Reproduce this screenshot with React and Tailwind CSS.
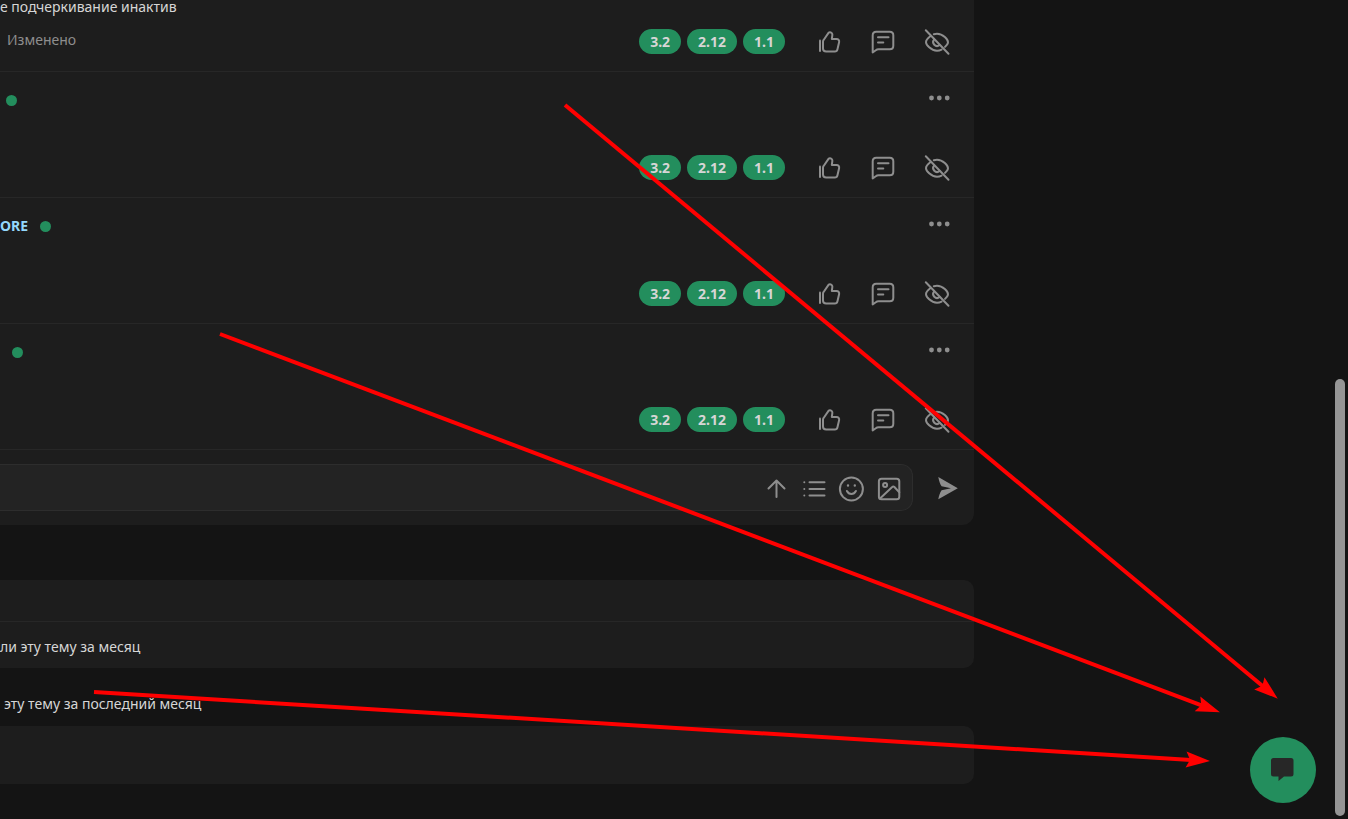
import { clsx } from "clsx";

const TAGS = ["3.2", "2.12", "1.1"];

const POSTS = [
  { id: 1, name: "", dotClass: "ml-1.5" },
  { id: 2, name: "ORE", dotClass: "ml-3" },
  { id: 3, name: "", dotClass: "ml-3" },
];

const ARROWS = [
  { from: [565, 105], to: [1277, 698] },
  { from: [220, 334], to: [1219, 712] },
  { from: [94, 692], to: [1209, 761] },
];

function Icon({ size = 24, children }) {
  return (
    <svg
      width={size}
      height={size}
      viewBox={`0 0 ${size} ${size}`}
      fill="none"
      stroke="currentColor"
      strokeWidth="2"
      strokeLinecap="round"
      strokeLinejoin="round"
      className="block overflow-visible"
      aria-hidden="true"
    >
      {children}
    </svg>
  );
}

function IconButton({ label, className, children }) {
  return (
    <button type="button" aria-label={label} className={clsx("shrink-0 text-[#8e8e8e] hover:text-[#d6d6d6]", className)}>
      {children}
    </button>
  );
}

const LikeIcon = () => (
  <Icon>
    <path d="M3 10.500v10.500" />
    <path d="M6 11.700c0-.9.3-1.400.8-2L11.500 2.900c.8-1.100 2.500-.9 3.300.2.6.7.7 1.400.5 2.200L14.800 9h4.700c1.900 0 3 1.500 2.600 3.200l-1.700 7.200c-.3 1.300-1.300 2-2.500 2H9.200C7.300 21.400 6 20.200 6 18.400z" />
  </Icon>
);

const CommentIcon = () => (
  <Icon>
    <path d="M1.700 22.500V5.200c0-2.200 1.300-3.500 3.500-3.500h13.600c2.200 0 3.500 1.300 3.500 3.500v10.600c0 2.200-1.300 3.500-3.500 3.500H7.500c-1.100 0-1.900.3-2.700 1z" />
    <path d="M7 7.300h10.500M7 12.600h5.300" />
  </Icon>
);

const HideIcon = () => (
  <Icon>
    <path d="M.8.3l22.700 23.400" />
    <path d="M5.300 6.300C3 8 1 10.700 1 12.200c0 2.300 4.800 8.500 11 8.500 1.700 0 3.200-.4 4.600-1.100" />
    <path d="M8.800 4.200C9.800 3.900 10.900 3.700 12 3.700c6.200 0 11 6.200 11 8.500 0 1-1.300 3-3 4.700" />
    <path d="M9.200 9.400a3.900 3.900 0 0 0 5.400 5.600" />
  </Icon>
);

function PostActions() {
  return (
    <div className="ml-auto flex items-center">
      <ul className="flex gap-1.5">
        {TAGS.map((tag) => (
          <li key={tag}>
            <a href="#tag" className="block rounded-full bg-[#238e5d] px-[11px] text-sm leading-[25px] font-bold text-[#d6d6d6]">
              {tag}
            </a>
          </li>
        ))}
      </ul>
      <div className="ml-8 flex gap-[30px]">
        <IconButton label="Нравится">
          <LikeIcon />
        </IconButton>
        <IconButton label="Комментировать">
          <CommentIcon />
        </IconButton>
        <IconButton label="Скрыть">
          <HideIcon />
        </IconButton>
      </div>
    </div>
  );
}

function Post({ name, dotClass }) {
  return (
    <article className="flex h-[126px] flex-col justify-between border-b border-[#272727] pt-4 pr-[25px] pb-[17px]">
      <header className="flex items-start">
        <div className="flex h-6 items-center">
          {name && (
            <a href="#user" className="text-sm font-bold text-[#94d8fb]">
              {name}
            </a>
          )}
          <span className={clsx("size-[11px] rounded-full bg-[#238e5d]", dotClass)} />
        </div>
        <IconButton label="Ещё" className="ml-auto">
          <Icon>
            <g fill="currentColor" stroke="none">
              <circle cx="6.500" cy="10" r="2.400" />
              <circle cx="14.300" cy="10" r="2.400" />
              <circle cx="22.200" cy="10" r="2.400" />
            </g>
          </Icon>
        </IconButton>
      </header>
      <PostActions />
    </article>
  );
}

function Composer() {
  return (
    <form className="flex items-center pt-3.5 pr-[15px] pb-3.5" onSubmit={(e) => e.preventDefault()}>
      <div className="flex h-[47px] flex-1 items-center gap-2.5 rounded-r-xl border border-l-0 border-[#2d2d2d] bg-[#232323] pr-[9px]">
        <input
          type="text"
          aria-label="Комментарий"
          className="min-w-0 flex-1 bg-transparent px-3 text-sm text-[#d6d6d6] outline-none"
        />
        <IconButton label="Развернуть">
          <Icon size={28}>
            <path d="M15.500 23V7M7.500 14.500l8-8 8 8" />
          </Icon>
        </IconButton>
        <IconButton label="Список">
          <Icon size={28}>
            <path d="M10.500 8.200h15M10.500 15h15M10.500 21.500h15" />
            <path d="M5.300 8.200v.01M5.300 15v.01M5.300 21.500v.01" />
          </Icon>
        </IconButton>
        <IconButton label="Смайлы">
          <Icon size={28}>
            <circle cx="14.400" cy="15" r="11.500" />
            <path d="M9.900 17c1 2 2.600 3 4.500 3s3.500-1 4.500-3" />
            <path d="M11 11.500v.01M17.800 11.500v.01" strokeWidth="2.400" />
          </Icon>
        </IconButton>
        <IconButton label="Изображение">
          <Icon size={28}>
            <rect x="3.900" y="4.700" width="20.400" height="20.600" rx="2.600" />
            <circle cx="10.100" cy="10.900" r="2" />
            <path d="M5 24.400l12.200-11.400c.7-.7 1.500-.7 2.200 0l4.900 5.200" />
          </Icon>
        </IconButton>
      </div>
      <IconButton label="Отправить" className="ml-[22px]">
        <Icon>
          <path d="M3.300 1.100 22.800 12.300 3.300 23.300C4 19.500 5 16.500 6.600 14.300l9.400-2-9.400-2C5 8.100 4 5 3.300 1.100z" fill="currentColor" stroke="none" />
        </Icon>
      </IconButton>
    </form>
  );
}

function Annotations() {
  return (
    <svg className="pointer-events-none absolute top-0 left-0" width="1348" height="819" viewBox="0 0 1348 819" aria-hidden="true">
      {ARROWS.map(({ from, to }) => {
        const angle = (Math.atan2(to[1] - from[1], to[0] - from[0]) * 180) / Math.PI;
        const length = Math.hypot(to[0] - from[0], to[1] - from[1]);
        return (
          <g key={from.join()} transform={`translate(${to[0]} ${to[1]}) rotate(${angle})`} fill="#ff0000">
            <rect x={-length} y="-2" width={length - 18} height="4" />
            <path d="M1 0l-24-8 4 8-4 8z" />
          </g>
        );
      })}
    </svg>
  );
}

export default function App() {
  return (
    <div className="relative flex min-h-screen overflow-hidden bg-[#141414] font-['Noto_Sans',sans-serif] text-sm text-[#d6d6d6]">
      <main className="min-w-0 flex-1">
        <section className="rounded-br-xl bg-[#1d1d1d]">
          <article className="border-b border-[#272727] pr-[25px] pb-[17px]">
            <p className="leading-[14px]">е подчеркивание инактив</p>
            <div className="flex h-10 items-end">
              <span className="pb-1 pl-[7px] text-[#8e8e8e]">Изменено</span>
              <PostActions />
            </div>
          </article>
          {POSTS.map((post) => (
            <Post key={post.id} {...post} />
          ))}
          <Composer />
        </section>

        {/* Readers of the topic */}
        <section className="mt-[55px] rounded-r-[10px] bg-[#1d1d1d]">
          <div className="h-[41px]" />
          <p className="border-t border-[#272727] pt-[15px] pb-[11px] leading-5">ли эту тему за месяц</p>
        </section>
        <h2 className="mt-[26px] pl-1 leading-5">эту тему за последний месяц</h2>
        <section className="mt-3 h-[58px] rounded-r-[10px] bg-[#1d1d1d]" />
      </main>
      <aside className="w-[374px] shrink-0" />

      <button
        type="button"
        aria-label="Чат"
        className="absolute right-8 bottom-4 flex size-[66px] items-center justify-center rounded-full bg-[#238e5d] text-[#272727]"
      >
        <svg width="24" height="24" viewBox="0 0 24 24" fill="currentColor" aria-hidden="true">
          <path d="M2.500 0h17.500a2.500 2.500 0 0 1 2.500 2.500v13.500a2.500 2.500 0 0 1-2.500 2.500h-7L7.500 23v-4.500h-5A2.500 2.500 0 0 1 0 16V2.500A2.500 2.500 0 0 1 2.500 0z" />
        </svg>
      </button>
      <div className="absolute right-[3px] bottom-[3px] h-[437px] w-2.5 rounded-full bg-[#959595]" />
      <Annotations />
    </div>
  );
}
